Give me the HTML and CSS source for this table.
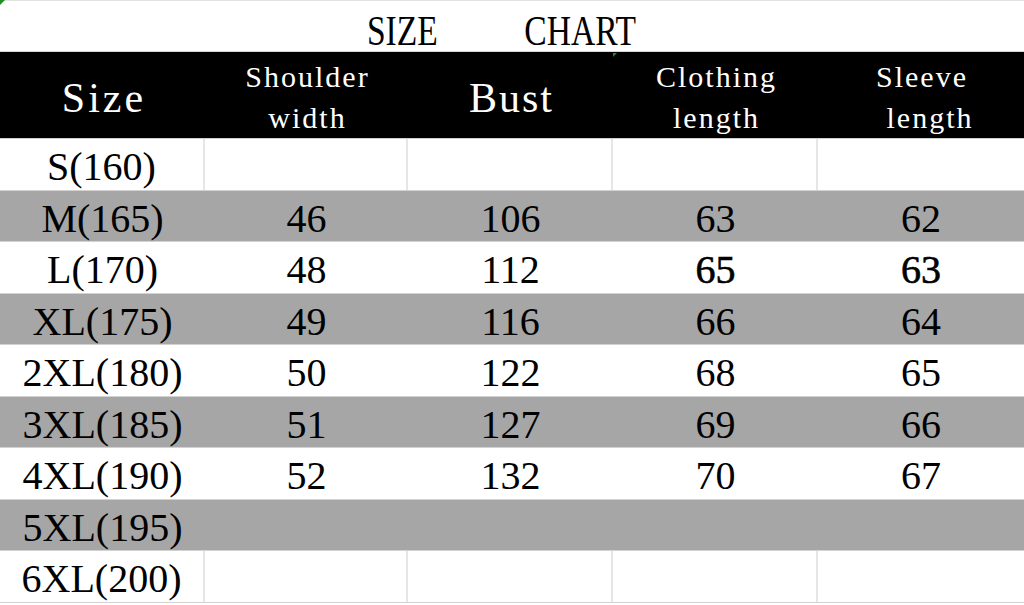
FILE: index.html
```html
<!DOCTYPE html>
<html>
<head>
<meta charset="utf-8">
<title>Size Chart</title>
<link rel="stylesheet" href="styles.css">
</head>
<body>
<div class="sheet">
  <span class="marker marker-corner"></span>
  <span class="marker marker-head"></span>
  <div class="title">
    <div class="title-inner"><span>SIZE</span><span>CHART</span></div>
  </div>
  <div class="row head">
    <div class="cell big">Size</div>
    <div class="cell two">Shoulder<br>width</div>
    <div class="cell big bust">Bust</div>
    <div class="cell two">Clothing<br>length</div>
    <div class="cell two">Sleeve<br><span class="shift">length</span></div>
  </div>
  <div class="row grid-row">
    <div class="cell">S(160)</div><div class="cell"></div><div class="cell"></div><div class="cell"></div><div class="cell"></div>
  </div>
  <div class="row gray">
    <div class="cell">M(165)</div><div class="cell">46</div><div class="cell">106</div><div class="cell">63</div><div class="cell">62</div>
  </div>
  <div class="row white">
    <div class="cell">L(170)</div><div class="cell">48</div><div class="cell">112</div><div class="cell strong">65</div><div class="cell strong">63</div>
  </div>
  <div class="row gray">
    <div class="cell">XL(175)</div><div class="cell">49</div><div class="cell">116</div><div class="cell">66</div><div class="cell">64</div>
  </div>
  <div class="row white">
    <div class="cell">2XL(180)</div><div class="cell">50</div><div class="cell">122</div><div class="cell">68</div><div class="cell">65</div>
  </div>
  <div class="row gray">
    <div class="cell">3XL(185)</div><div class="cell">51</div><div class="cell">127</div><div class="cell">69</div><div class="cell">66</div>
  </div>
  <div class="row white">
    <div class="cell">4XL(190)</div><div class="cell">52</div><div class="cell">132</div><div class="cell">70</div><div class="cell">67</div>
  </div>
  <div class="row gray">
    <div class="cell">5XL(195)</div><div class="cell"></div><div class="cell"></div><div class="cell"></div><div class="cell"></div>
  </div>
  <div class="row grid-row">
    <div class="cell">6XL(200)</div><div class="cell"></div><div class="cell"></div><div class="cell"></div><div class="cell"></div>
  </div>
</div>
</body>
</html>
```

FILE: styles.css
```css
html, body {
  margin: 0;
  padding: 0;
  background: #ffffff;
}

.sheet {
  position: relative;
  width: 1024px;
  height: 605px;
  overflow: hidden;
  font-family: "Liberation Serif", "Times New Roman", serif;
  color: #000000;
  background: #ffffff;
}

.marker {
  position: absolute;
  width: 0;
  height: 0;
  border-right: 5px solid transparent;
  border-top: 5px solid #1f8f1f;
  z-index: 2;
}

.marker-corner {
  left: 0;
  top: 0;
}

.marker-head {
  left: 613px;
  top: 53px;
  border-right-width: 4px;
  border-top-width: 4px;
}

.title {
  box-sizing: border-box;
  height: 52px;
  border-top: 1px solid #e2e2e2;
  border-bottom: 1px solid #d6d6d6;
  display: flex;
  justify-content: center;
  padding-right: 22px;
  padding-top: 8px;
}

.title-inner {
  display: flex;
  gap: 111px;
  font-size: 43px;
  line-height: 43px;
  transform: scaleX(0.78);
  transform-origin: center;
}

.row {
  display: grid;
  grid-template-columns: 205px 203px 205px 205px 206px;
  box-sizing: border-box;
  height: 51.5px;
  border-bottom: 1px solid #d2d2d2;
}

.row.head {
  height: 87px;
  background: #000000;
  color: #ffffff;
  border-bottom: 1px solid #cfcfcf;
}

.row.gray {
  background: #a6a6a6;
}

.row.white {
  background: #ffffff;
}

.cell {
  box-sizing: border-box;
  text-align: center;
  font-size: 40px;
  line-height: 40px;
  padding-top: 8px;
  white-space: nowrap;
}

.grid-row .cell {
  border-right: 2px solid #e6e6e6;
}

.grid-row .cell:last-child {
  border-right: none;
}

.strong {
  -webkit-text-stroke: 0.6px #000000;
}

.head .cell {
  padding-top: 0;
}

.head .big {
  font-size: 42px;
  line-height: 42px;
  padding-top: 25px;
  letter-spacing: 3px;
  padding-left: 3px;
}

.head .bust {
  letter-spacing: 2px;
  padding-left: 2px;
}

.head .two {
  font-size: 30px;
  line-height: 41px;
  padding-top: 4px;
  letter-spacing: 2px;
  padding-left: 2px;
}

.shift {
  padding-left: 16px;
}
```
